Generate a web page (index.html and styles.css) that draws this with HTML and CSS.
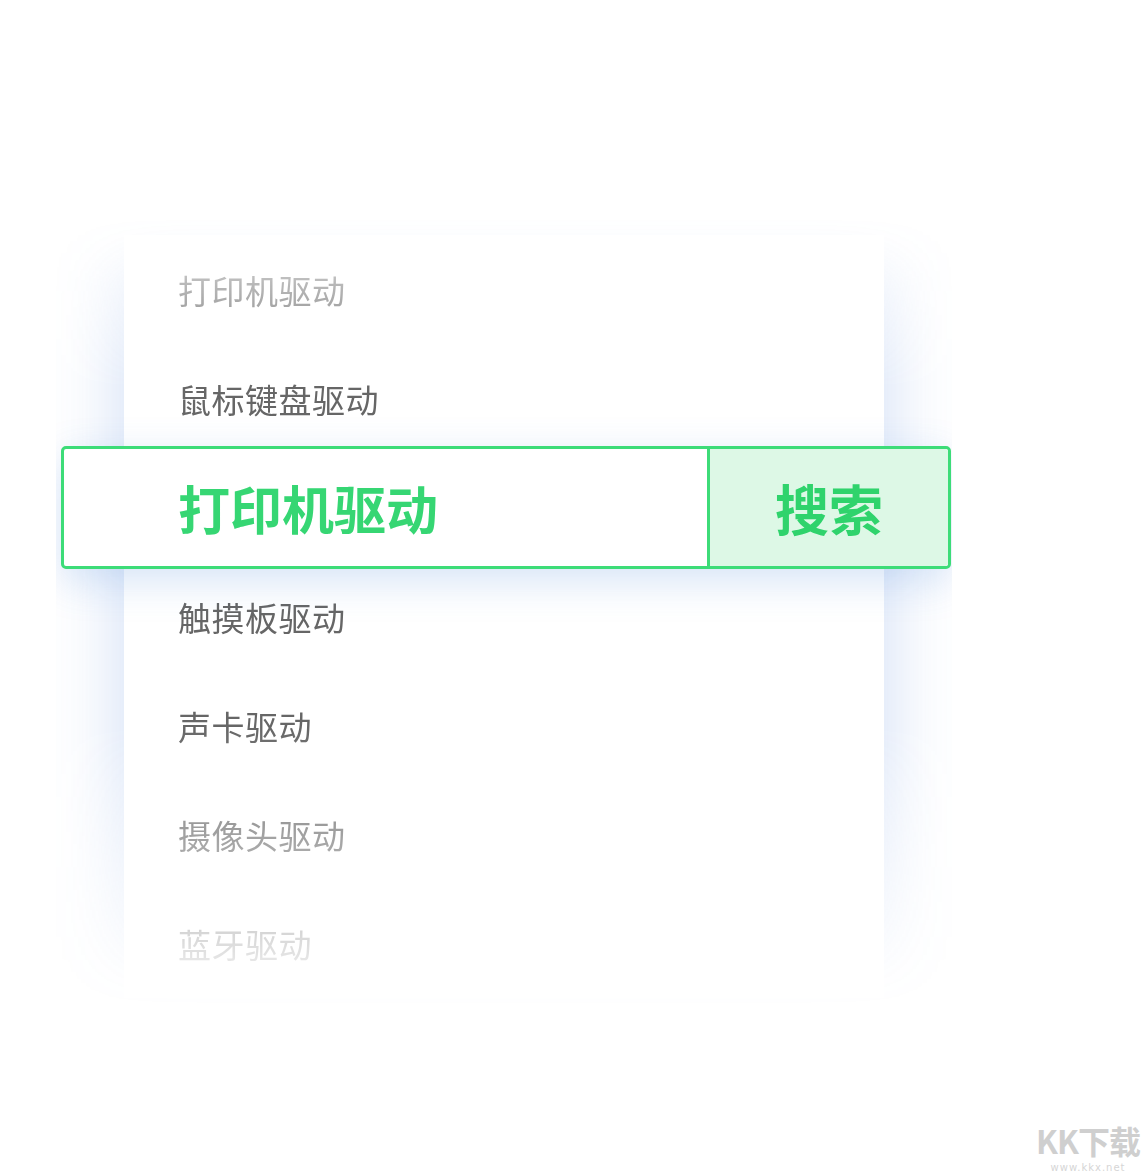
FILE: index.html
```html
<!DOCTYPE html>
<html lang="zh-CN">
<head>
<meta charset="utf-8">
<title>驱动搜索</title>
<link rel="stylesheet" href="styles.css">
</head>
<body>
<main class="stage">
  <div class="fade">
    <ul class="card">
      <li class="item">打印机驱动</li>
      <li class="item">鼠标键盘驱动</li>
      <li class="search">
        <div class="search-input">打印机驱动</div>
        <div class="search-btn">搜索</div>
      </li>
      <li class="item">触摸板驱动</li>
      <li class="item">声卡驱动</li>
      <li class="item">摄像头驱动</li>
      <li class="item">蓝牙驱动</li>
    </ul>
  </div>
</main>
<div class="watermark">
  <div class="wm-big">KK下载</div>
  <div class="wm-small">www.kkx.net</div>
</div>
</body>
</html>
```
FILE: styles.css
```css
html, body {
  margin: 0;
  padding: 0;
  background: #ffffff;
}
body {
  width: 1144px;
  height: 1176px;
  position: relative;
  overflow: hidden;
  font-family: "Noto Sans CJK SC", "Noto Sans", sans-serif;
}
.stage {
  padding-top: 167px;
  padding-left: 56px;
}
.fade {
  width: 760px;
  padding: 68px;
  -webkit-mask-image: linear-gradient(to bottom, rgba(0,0,0,0) 0px, rgba(0,0,0,0) 50px, rgba(0,0,0,0.45) 115px, #000 220px, #000 560px, rgba(0,0,0,0) 840px);
  mask-image: linear-gradient(to bottom, rgba(0,0,0,0) 0px, rgba(0,0,0,0) 50px, rgba(0,0,0,0.45) 115px, #000 220px, #000 560px, rgba(0,0,0,0) 840px);
}
.card {
  list-style: none;
  margin: 0;
  padding: 0;
  background: #ffffff;
  box-shadow: 0 0 70px rgba(80, 130, 220, 0.28);
  display: flex;
  flex-direction: column;
}
.item {
  height: 109px;
  display: flex;
  align-items: center;
  padding-left: 54px;
  font-size: 33px;
  color: #666666;
  letter-spacing: 0.5px;
}
.search {
  height: 123px;
  margin: -7px -67px -7px -63px;
  box-sizing: border-box;
  border: 3px solid #3ddc78;
  border-radius: 5px;
  background: #ffffff;
  display: flex;
  box-shadow: 0 12px 40px rgba(70, 130, 220, 0.22);
  position: relative;
}
.search-input {
  flex: 1;
  display: flex;
  align-items: center;
  padding-left: 114px;
  font-size: 52px;
  font-weight: 700;
  color: #36d673;
  border-right: 3px solid #3ddc78;
}
.search-btn {
  width: 238px;
  display: flex;
  align-items: center;
  justify-content: center;
  font-size: 54px;
  font-weight: 700;
  color: #2fd36c;
  background: #ddf8e6;
  border-radius: 0 3px 3px 0;
}
.watermark {
  position: absolute;
  right: 4px;
  bottom: 2px;
  text-align: center;
  color: #cfcfcf;
}
.wm-big {
  font-size: 32px;
  font-weight: 700;
  line-height: 42px;
  letter-spacing: -1px;
}
.wm-small {
  font-family: "DejaVu Sans", sans-serif;
  font-size: 10px;
  line-height: 13px;
  letter-spacing: 1px;
  color: #d6d6d6;
}
```
